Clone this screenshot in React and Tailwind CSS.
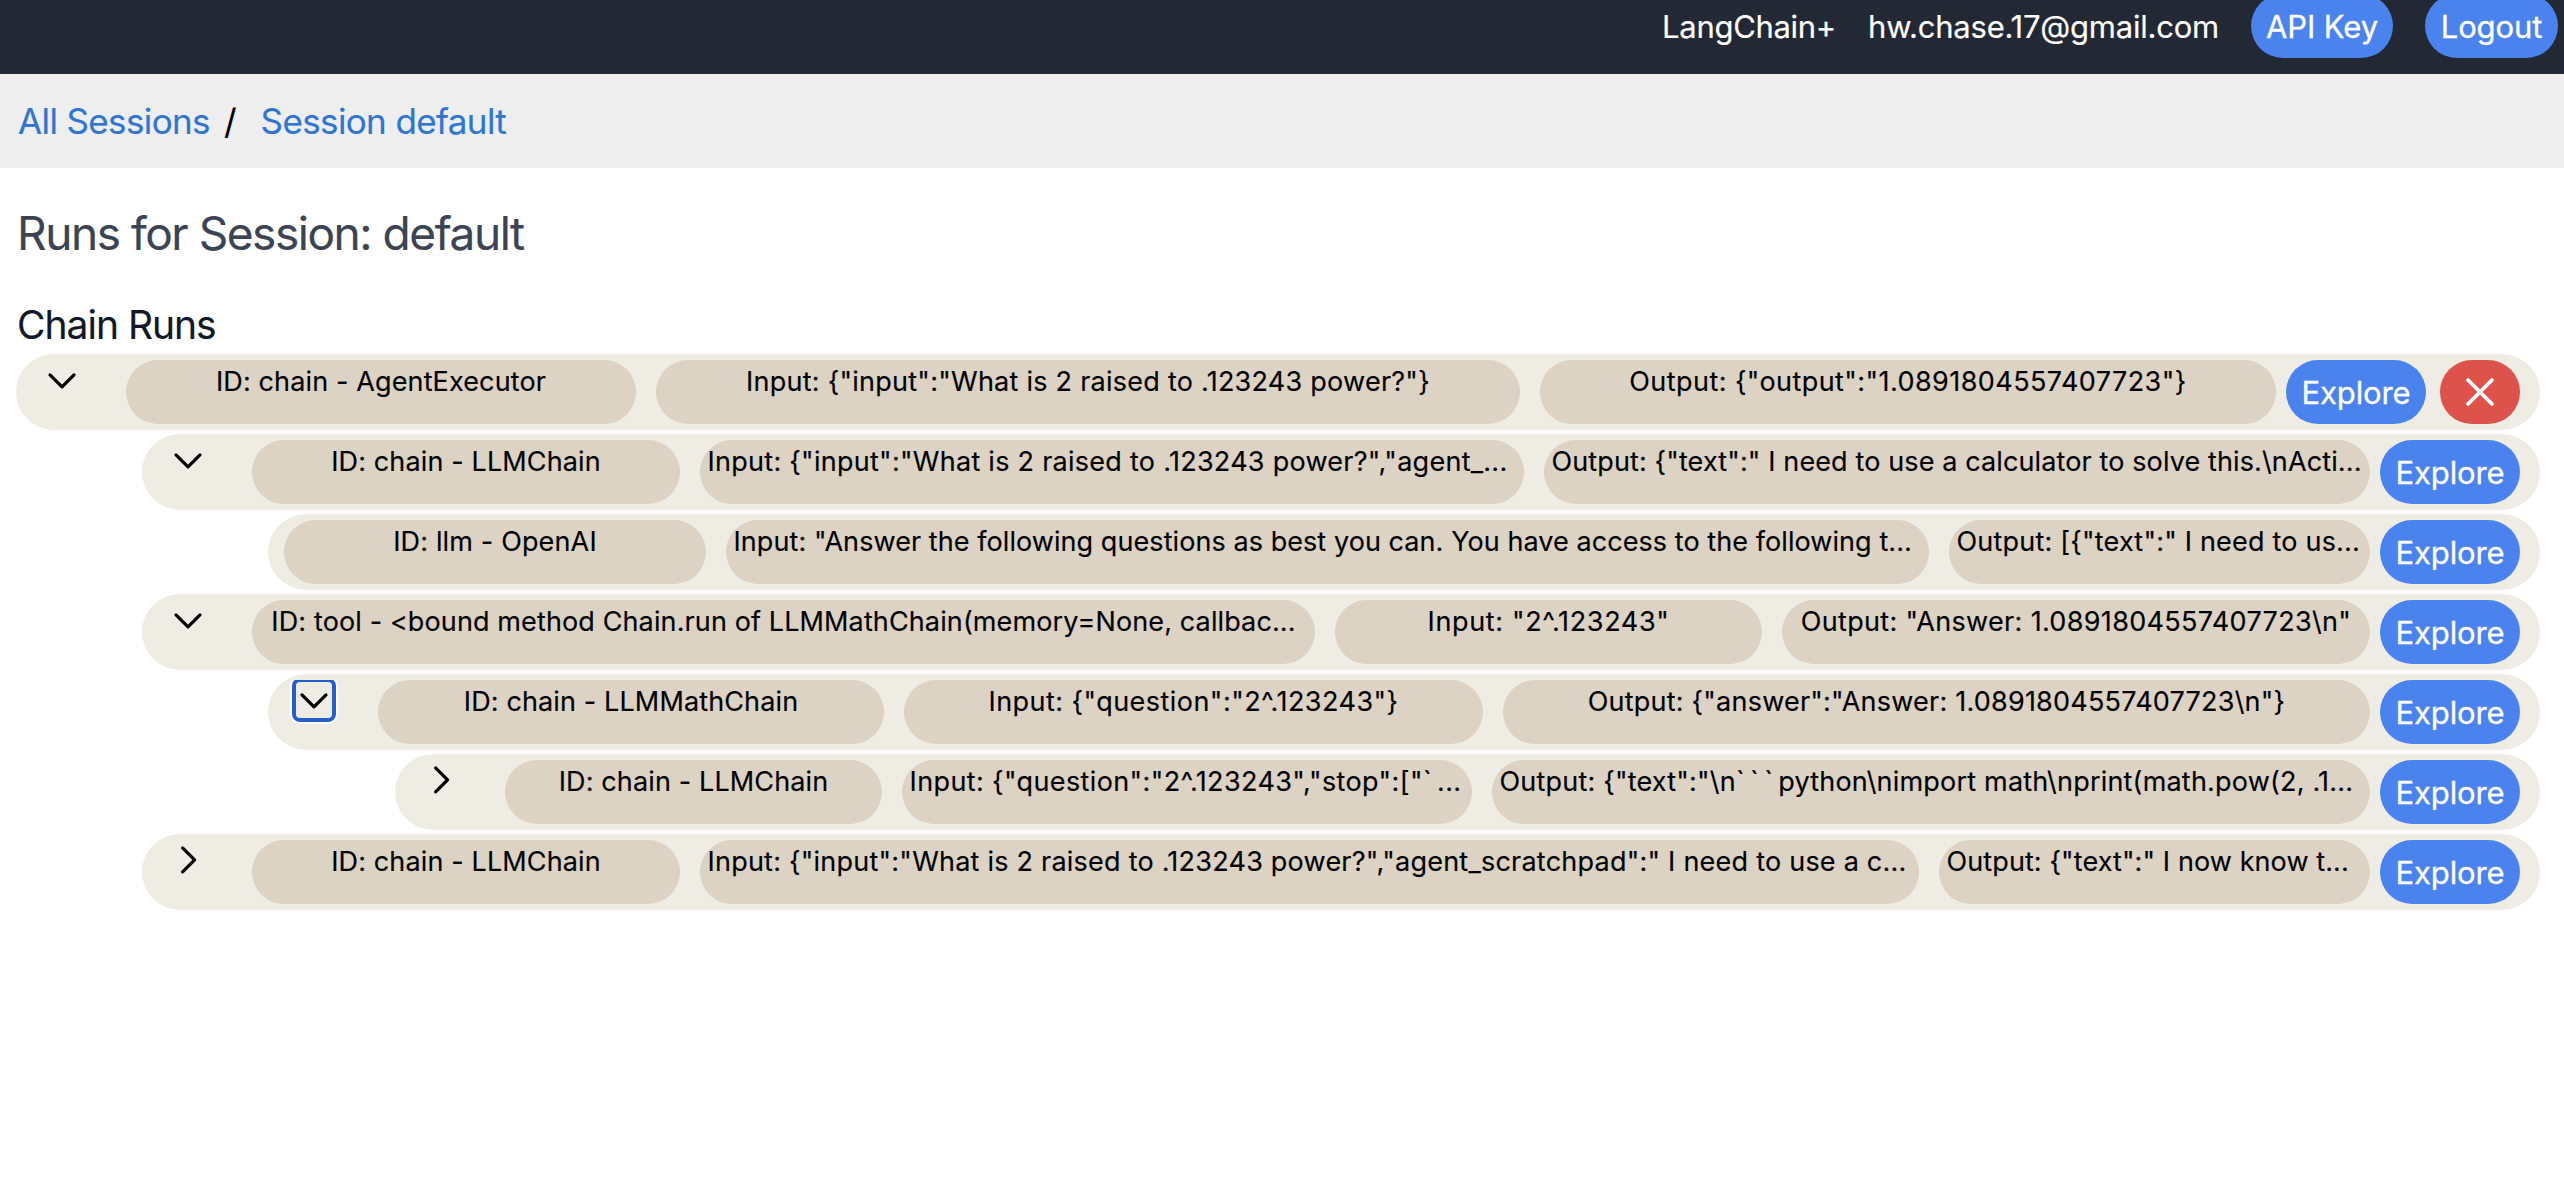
import { Fragment } from "react";

const ROWS = [
  {
    indent: "", open: true, removable: true,
    cells: [
      ["w-[510px]", "tracking-[0.13px]", "ID: chain - AgentExecutor"],
      ["w-[864px]", "tracking-[0.25px]", 'Input: {"input":"What is 2 raised to .123243 power?"}'],
      ["flex-1", "tracking-[0.43px]", 'Output: {"output":"1.0891804557407723"}'],
    ],
  },
  {
    indent: "ml-[126px]", open: true,
    cells: [
      ["w-[428px]", "tracking-[0.13px]", "ID: chain - LLMChain"],
      ["w-[824px]", "tracking-[0.27px]", 'Input: {"input":"What is 2 raised to .123243 power?","agent_...', true],
      ["flex-1", "tracking-[0.12px]", 'Output: {"text":" I need to use a calculator to solve this.\\nActi...', true],
    ],
  },
  {
    indent: "ml-[252px]", leaf: true,
    cells: [
      ["w-[422px]", "tracking-[0.15px]", "ID: llm - OpenAI"],
      ["w-[1203px]", "tracking-[0.07px]", 'Input: "Answer the following questions as best you can. You have access to the following t...', true],
      ["flex-1", "tracking-[0.2px]", 'Output: [{"text":" I need to us...', true],
    ],
  },
  {
    indent: "ml-[126px]", open: true,
    cells: [
      ["w-[1063px]", "tracking-[0.12px]", "ID: tool - <bound method Chain.run of LLMMathChain(memory=None, callbac..."],
      ["w-[427px]", "tracking-[0.65px]", 'Input: "2^.123243"'],
      ["flex-1", "tracking-[0.33px]", 'Output: "Answer: 1.0891804557407723\\n"'],
    ],
  },
  {
    indent: "ml-[252px]", open: true, focused: true,
    cells: [
      ["w-[506px]", "tracking-[0.13px]", "ID: chain - LLMMathChain"],
      ["w-[579px]", "tracking-[0.46px]", 'Input: {"question":"2^.123243"}'],
      ["flex-1", "tracking-[0.22px]", 'Output: {"answer":"Answer: 1.0891804557407723\\n"}'],
    ],
  },
  {
    indent: "ml-[379px]", open: false,
    cells: [
      ["w-[377px]", "tracking-[0.13px]", "ID: chain - LLMChain"],
      ["w-[570px]", "tracking-[0.38px]", 'Input: {"question":"2^.123243","stop":["`...', true],
      ["flex-1", "tracking-[0.2px]", 'Output: {"text":"\\n```python\\nimport math\\nprint(math.pow(2, .1...', true],
    ],
  },
  {
    indent: "ml-[126px]", open: false,
    cells: [
      ["w-[428px]", "tracking-[0.13px]", "ID: chain - LLMChain"],
      ["w-[1219px]", "tracking-[0.23px]", 'Input: {"input":"What is 2 raised to .123243 power?","agent_scratchpad":" I need to use a c...', true],
      ["flex-1", "tracking-[0.1px]", 'Output: {"text":" I now know t...', true],
    ],
  },
];

function Toggle({ open, focused }) {
  return (
    <div className="h-16 w-[110px] shrink-0 overflow-hidden pl-7 pt-0.5">
      <button
        className={
          focused
            ? "block size-9 rounded-[4px] shadow-[0_0_0_4px_#235fcd,0_0_0_6px_#ffffff]"
            : "block size-9 rounded-[4px]"
        }
      >
        <svg viewBox="0 0 36 36" className="size-9" fill="none" stroke="#000" strokeWidth="3.2" strokeLinecap="round" strokeLinejoin="round">
          <path d={open ? "M6 12.9 L18 24.9 L30 12.9" : "M12.6 5.9 L24.6 17.9 L12.6 29.9"} />
        </svg>
      </button>
    </div>
  );
}

function Cell({ width, tracking, left, children }) {
  const parts = children.split(/(`+)/);
  return (
    <div className={`${width} h-16 min-w-0 shrink-0 overflow-hidden whitespace-nowrap rounded-full bg-[#dcd3c4] pt-1 text-[27px] leading-9 text-black ${tracking} ${left ? "pl-[7.5px] text-left" : "text-center"}`}>
      {parts.map((part, i) =>
        part.startsWith("`") ? <span key={i} className="tracking-[5.4px]">{part}</span> : part
      )}
    </div>
  );
}

function Pill({ width, children }) {
  return (
    <button className={`${width} flex h-16 shrink-0 items-center justify-center rounded-full bg-[#4a83ee] pt-0.5 text-[31px] tracking-[-0.1px] text-white [-webkit-text-stroke:0.3px]`}>
      {children}
    </button>
  );
}

function RunRow({ run }) {
  return (
    <div className={`${run.indent} flex h-[76px] items-center rounded-full bg-[#efece3] pr-5 ${run.leaf ? "pl-4" : ""}`}>
      {!run.leaf && <Toggle open={run.open} focused={run.focused} />}
      {run.cells.map(([width, tracking, text, left], i) => (
        <Fragment key={i}>
          {i > 0 && <div className="w-5 shrink-0" />}
          <Cell width={width} tracking={tracking} left={left}>{text}</Cell>
        </Fragment>
      ))}
      <div className="ml-2.5 flex gap-3.5">
        <Pill width="w-[140px]">Explore</Pill>
        {run.removable && (
          <button className="flex h-16 w-20 shrink-0 items-center justify-center rounded-full bg-[#dd524b]">
            <svg viewBox="0 0 32 32" className="size-8" stroke="#fff" strokeWidth="3.8" strokeLinecap="round">
              <path d="M4 4 L28 28 M28 4 L4 28" />
            </svg>
          </button>
        )}
      </div>
    </div>
  );
}

export default function App() {
  return (
    <div className="min-h-screen bg-white font-['Inter',sans-serif] [-webkit-text-stroke:0.15px]">
      <header className="flex h-[74px] justify-end overflow-hidden bg-[#222935] pr-[6px] text-[31px] text-white">
        <div className="-mt-1.5 flex h-16 items-center">
          <span className="mr-8 pt-0.5 tracking-[-0.3px]">LangChain+</span>
          <span className="mr-8 pt-0.5 tracking-[-0.22px]">hw.chase.17@gmail.com</span>
          <span className="mr-8"><Pill width="w-[142px]">API Key</Pill></span>
          <Pill width="w-[133px]">Logout</Pill>
        </div>
      </header>
      <nav className="flex h-[94px] items-center bg-[#eeeeee] pl-[18px] text-[35px] text-[#2f76d2]">
        <a className="tracking-[-0.62px]">All Sessions</a>
        <span className="ml-3.5 mr-6 text-black">/</span>
        <a className="tracking-[-0.62px]">Session default</a>
      </nav>
      <main className="pl-4 pr-6">
        <h1 className="mt-9 pl-px text-[46px] leading-[58px] tracking-[-1.45px] text-[#3c4453]">Runs for Session: default</h1>
        <h2 className="mt-[39px] pl-px text-[39px] leading-[48px] tracking-[-1px] text-[#111827]">Chain Runs</h2>
        <div className="mt-[5px] flex flex-col gap-1">
          {ROWS.map((run, i) => <RunRow key={i} run={run} />)}
        </div>
      </main>
    </div>
  );
}
